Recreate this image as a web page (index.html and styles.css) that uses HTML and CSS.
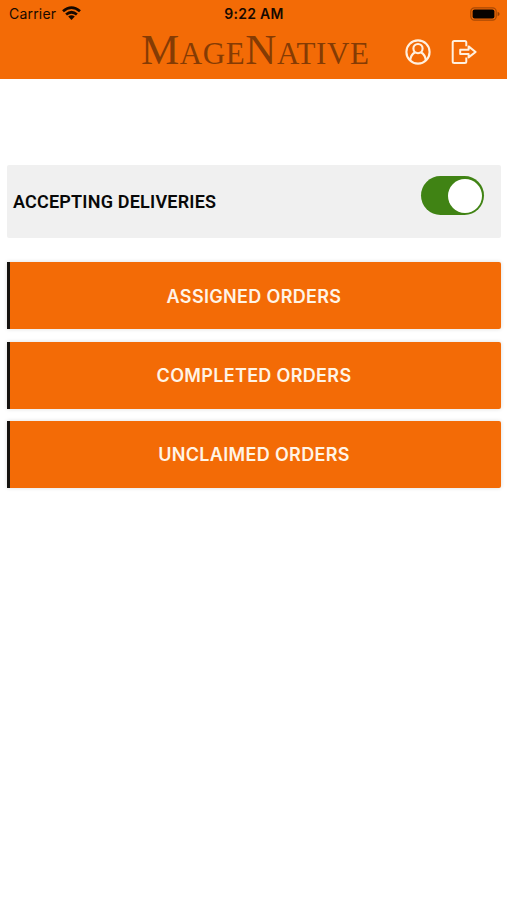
FILE: index.html
```html
<!DOCTYPE html>
<html lang="en">
<head>
<meta charset="utf-8">
<meta name="viewport" content="width=device-width, initial-scale=1">
<title>MageNative Deliveries</title>
<link rel="stylesheet" href="styles.css">
</head>
<body>
<header class="header">
  <div class="status">
    <div class="carrier">
      <span>Carrier</span>
      <svg class="wifi" width="19" height="14" viewBox="0 0 19 14" fill="none" stroke="#160900" stroke-width="2.7">
        <path d="M1 5.3Q9.5-2.2 18 5.3M4.1 8.6Q9.5 3.9 14.9 8.6"/>
        <path d="M6.2 10.6Q9.5 7.8 12.8 10.6L9.5 13.9Z" fill="#160900" stroke="none"/>
      </svg>
    </div>
    <span class="time">9:22 AM</span>
    <svg class="battery" width="30" height="14" viewBox="0 0 30 14">
      <rect x=".8" y=".8" width="25.4" height="12.4" rx="3.6" fill="none" stroke="#a94905" stroke-width="1.2"/>
      <rect x="2.6" y="2.5" width="21.8" height="9" rx="2" fill="#080300"/>
      <path d="M27.6 4.7Q29.6 5.5 29.6 7T27.6 9.3Z" fill="#993f00"/>
    </svg>
  </div>
  <div class="navbar">
    <div class="logo"><span class="cap">M</span>AGE<span class="cap">N</span>ATIVE</div>
    <nav class="actions">
      <svg width="26" height="26" viewBox="0 0 26 26" fill="none" stroke="#fff0df" stroke-width="2.1">
        <circle cx="13" cy="13" r="11.6"/>
        <circle cx="13" cy="9.6" r="4.6"/>
        <path d="M5.2 21.4C5.5 17.2 7.4 14.7 10.2 13.2M20.8 21.4C20.5 17.2 18.6 14.7 15.8 13.2"/>
      </svg>
      <svg width="26" height="26" viewBox="0 0 26 26" fill="none" stroke="#fff0df" stroke-width="2" stroke-linejoin="round">
        <path d="M15.3 7.2V3.4Q15.3 1.9 13.8 1.9H3.2Q1.7 1.9 1.7 3.4V22.6Q1.7 24.1 3.2 24.1H13.8Q15.3 24.1 15.3 22.6V18.4"/>
        <path d="M9.2 10.8H17.6V7.4L24.6 13L17.6 18.4V15.1H9.2Z"/>
      </svg>
    </nav>
  </div>
</header>
<main class="content">
  <section class="availability">
    <span class="label">ACCEPTING DELIVERIES</span>
    <button class="switch" role="switch" aria-checked="true"><span class="knob"></span></button>
  </section>
  <div class="orders">
    <button class="order">ASSIGNED ORDERS</button>
    <button class="order">COMPLETED ORDERS</button>
    <button class="order">UNCLAIMED ORDERS</button>
  </div>
</main>
</body>
</html>
```
FILE: styles.css
```css
* { box-sizing: border-box; }
body {
  margin: 0;
  min-height: 900px;
  background: #fff;
  font-family: Inter, "Liberation Sans", sans-serif;
}
button { border: 0; padding: 0; font-family: inherit; }
svg { display: block; }
.header { height: 79px; background: #f36b06; }
.status {
  display: grid;
  grid-template-columns: 1fr auto 1fr;
  height: 27px;
  padding: 0 7px 0 9px;
  align-items: center;
  color: #160900;
  font-size: 14px;
}
.carrier { display: flex; align-items: center; gap: 6px; letter-spacing: .2px; }
.wifi { margin-top: -2px; }
.time { margin-right: 1px; font-weight: 600; letter-spacing: .3px; }
.battery { justify-self: end; }
.navbar {
  display: flex;
  height: 52px;
  padding: 0 30px 0 141px;
  justify-content: space-between;
}
.logo {
  color: #853b04;
  font: 31px/46px "Liberation Serif", serif;
  letter-spacing: .6px;
  white-space: nowrap;
}
.cap { font-size: 43px; }
.actions { display: flex; gap: 20px; padding-top: 12px; }
.content { padding: 86px 6px 0 7px; }
.availability {
  display: flex;
  height: 73px;
  padding: 0 17px 0 6px;
  justify-content: space-between;
  align-items: center;
  border-radius: 2px;
  background: #f0f0f0;
}
.label {
  color: #080808;
  font: 600 18px/22px Roboto, sans-serif;
  letter-spacing: .2px;
}
.switch {
  display: flex;
  width: 63px;
  height: 39px;
  margin-bottom: 12px;
  padding: 2px;
  justify-content: flex-end;
  align-items: center;
  border-radius: 20px;
  background: #408314;
}
.knob { width: 34px; height: 34px; border-radius: 50%; background: #fff; }
.orders { display: grid; gap: 12.3px; margin-top: 24.3px; }
.order {
  height: 67px;
  padding: 2px 3px 0 0;
  border-left: 3px solid #15120f;
  border-radius: 0 2px 2px 0;
  background: #f36b06;
  box-shadow: 0 0 4px rgba(0, 0, 0, .14);
  color: #fff4e6;
  font-size: 18px;
  font-weight: 600;
  letter-spacing: .33px;
  line-height: 22px;
}
```
